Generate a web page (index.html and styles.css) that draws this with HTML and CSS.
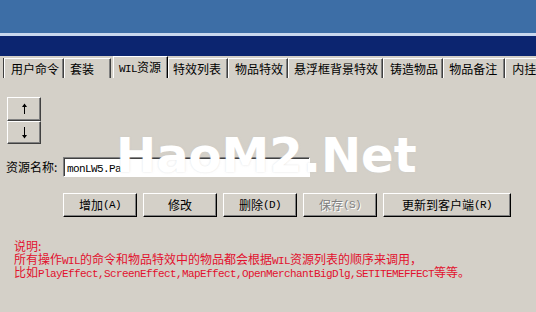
FILE: index.html
```html
<!DOCTYPE html>
<html lang="zh">
<head>
<meta charset="utf-8">
<title>WIL资源</title>
<link rel="stylesheet" href="styles.css">
</head>
<body>
<div class="screen">
  <div class="desk"></div>
  <div class="hl"></div>
  <div class="titlebar"></div>
  <div class="tabs">
    <div class="stub"></div>
    <div class="tab">用户命令</div>
    <div class="tab tab-wide">套装</div>
    <div class="tab tab-sel"><span class="m">WIL</span>资源</div>
    <div class="tab">特效列表</div>
    <div class="tab">物品特效</div>
    <div class="tab tab-tight">悬浮框背景特效</div>
    <div class="tab tab-l6">铸造物品</div>
    <div class="tab tab-r7">物品备注</div>
    <div class="tab">内挂插件</div>
  </div>
  <div class="panel">
    <div class="spin">
      <div class="spin-btn spin-up">
        <svg width="7" height="12" viewBox="0 0 7 12"><path d="M3.5 1V11" stroke="#000" stroke-width="1"/><path d="M3.5 0.5L1 4h5z" fill="#000"/></svg>
      </div>
      <div class="spin-btn spin-down">
        <svg width="7" height="12" viewBox="0 0 7 12"><path d="M3.5 0V10" stroke="#000" stroke-width="1"/><path d="M3.5 11.5L1 8h5z" fill="#000"/></svg>
      </div>
    </div>
    <div class="field">
      <span class="label">资源名称:</span>
      <div class="input"><span class="m">monLW5.Pa</span></div>
    </div>
    <div class="buttons">
      <div class="btn">增加<span class="m">(A)</span></div>
      <div class="btn">修改</div>
      <div class="btn">删除<span class="m">(D)</span></div>
      <div class="btn btn-dis">保存<span class="m">(S)</span></div>
      <div class="btn btn-big">更新到客户端<span class="m">(R)</span></div>
    </div>
    <div class="notes">
      <div class="line">说明:</div>
      <div class="line">所有操作<span class="m">WIL</span>的命令和物品特效中的物品都会根据<span class="m">WIL</span>资源列表的顺序来调用，</div>
      <div class="line">比如<span class="m">PlayEffect,ScreenEffect,MapEffect,OpenMerchantBigDlg,SETITEMEFFECT</span>等等。</div>
    </div>
  </div>
  <div class="watermark">HaoM2.Net</div>
</div>
</body>
</html>
```
FILE: styles.css
```css
* { box-sizing: border-box; }
html, body { margin: 0; padding: 0; }
body {
  background: #d4d0c8;
  font-family: "Noto Sans CJK SC", "Noto Sans", sans-serif;
  font-size: 12px;
  color: #000;
}
.screen {
  position: relative;
  width: 536px;
  height: 312px;
  overflow: hidden;
  background: #d4d0c8;
}
.desk { height: 33px; background: #3d6ea6; }
.hl { height: 3px; background: #c9d8ee; }
.titlebar { height: 20px; background: #0c2570; }

.m {
  font-family: "Liberation Mono", "DejaVu Sans Mono", monospace;
  font-size: 11px;
  letter-spacing: -0.6px;
}

.tabs {
  display: flex;
  align-items: flex-end;
  height: 22px;
  white-space: nowrap;
  overflow: hidden;
}
.stub {
  width: 4px;
  height: 20px;
  border-right: 1px solid #404040;
  flex: none;
}
.tab {
  flex: none;
  height: 20px;
  padding: 0 4px 0 6px;
  line-height: 20px;
  border-top: 1px solid #ffffff;
  border-left: 1px solid #ffffff;
  border-right: 1px solid #404040;
  box-shadow: inset -1px 0 #808080;
}
.tab-wide { padding: 0 16px 0 5px; }
.tab-sel {
  height: 22px;
  margin-left: 2px;
  padding: 0 6px 0 5px;
  line-height: 19px;
  border-right-color: #000;
}
.tab-sel + .tab { padding-left: 4px; padding-right: 6px; }
.tab-tight { padding: 0 4px 0 5px; }
.tab-l6 { padding: 0 4px 0 6px; }
.tab-r7 { padding: 0 7px 0 5px; }

.panel { padding-top: 19px; }

.spin {
  margin-left: 7px;
  width: 34px;
  display: flex;
  flex-direction: column;
}
.spin-btn {
  display: flex;
  align-items: center;
  justify-content: center;
  border-top: 1px solid #ffffff;
  border-left: 1px solid #ffffff;
  border-right: 1px solid #404040;
  border-bottom: 1px solid #404040;
  box-shadow: inset -1px -1px #808080;
}
.spin-up { height: 24px; }
.spin-down { height: 23px; }

.field {
  display: flex;
  align-items: center;
  margin-top: 13px;
  padding-left: 6px;
  height: 20px;
}
.label { width: 57px; line-height: 14px; }
.input {
  width: 247px;
  height: 20px;
  background: #fff;
  border-top: 1px solid #808080;
  border-left: 1px solid #808080;
  border-right: 1px solid #ffffff;
  border-bottom: 1px solid #ffffff;
  box-shadow: inset 1px 1px #404040;
  padding: 0 3px;
  line-height: 18px;
}

.buttons {
  display: flex;
  gap: 6px;
  margin-top: 16px;
  margin-left: 63px;
}
.btn {
  width: 74px;
  height: 24px;
  display: flex;
  align-items: center;
  justify-content: center;
  line-height: 14px;
  border-top: 1px solid #ffffff;
  border-left: 1px solid #ffffff;
  border-right: 1px solid #000000;
  border-bottom: 1px solid #000000;
  box-shadow: inset -1px -1px #808080;
}
.btn-big { width: 128px; }
.btn-dis { color: #808080; text-shadow: 1px 1px 0 #ffffff; }

.notes {
  margin-top: 22px;
  padding-left: 14px;
  color: #e2102e;
  white-space: nowrap;
}
.line { height: 13px; line-height: 13px; }

.watermark {
  position: absolute;
  left: 116px;
  top: 131px;
  font-family: "DejaVu Sans", sans-serif;
  font-weight: bold;
  font-size: 48px;
  line-height: 48px;
  color: #ffffff;
  text-shadow: 0 0 2px rgba(200, 200, 200, 0.6);
}
```
